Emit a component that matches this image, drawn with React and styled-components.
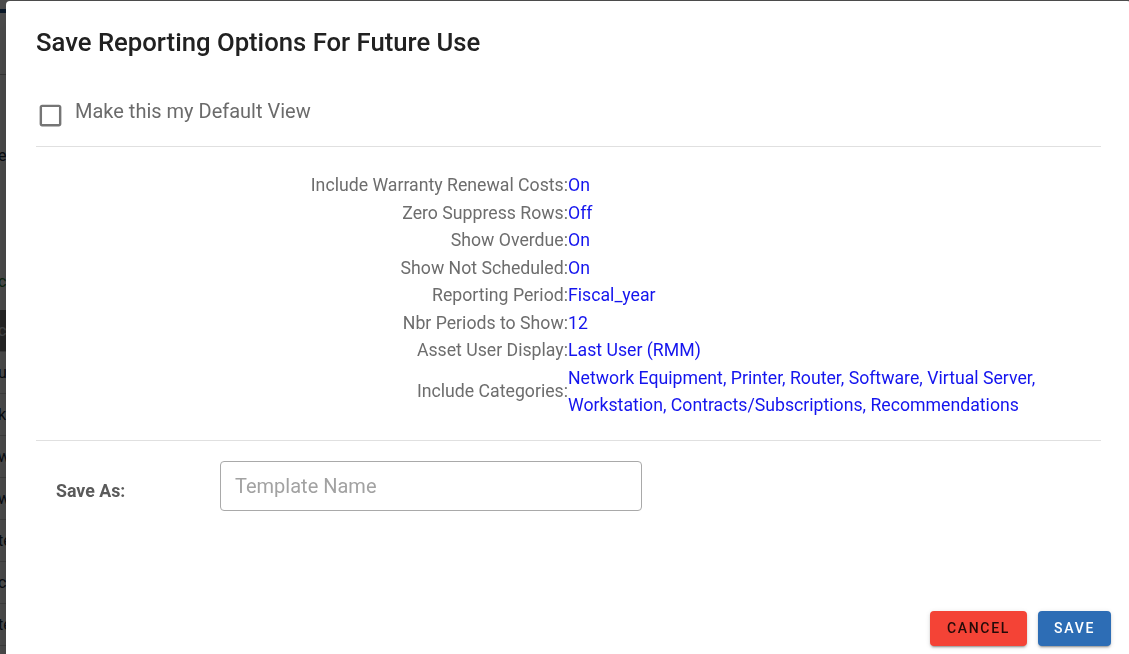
import React from "react";
import styled, { createGlobalStyle } from "styled-components";

const GlobalStyle = createGlobalStyle`
  html, body {
    margin: 0;
    padding: 0;
    width: 100%;
    height: 100%;
    overflow: hidden;
    background: #ffffff;
    font-family: Roboto, "Liberation Sans", Arial, sans-serif;
  }
`;

/* ---------- page behind the modal ---------- */

const Page = styled.div`
  width: 1129px;
  height: 654px;
  overflow: hidden;
  background: #ffffff;
  display: flex;
  flex-direction: column;
  & > * {
    flex-shrink: 0;
  }
`;

const PageHeader = styled.div`
  height: 75px;
  box-sizing: border-box;
  padding-top: 9px;
  border-bottom: 1px solid #b8b8b8;
  &::before {
    content: "";
    display: block;
    width: 18px;
    height: 4px;
    background: #1f4f86;
  }
`;

const PageSection = styled.div`
  height: 235px;
  padding-top: 72px;
  box-sizing: border-box;
  display: flex;
  flex-direction: column;
  gap: 108px;
`;

const PageText = styled.span`
  font-size: 16px;
  line-height: 18px;
  margin-left: -2px;
  color: ${(p) => p.$color || "#1c2b3a"};
`;

const TableHead = styled.div`
  height: 42px;
  box-sizing: border-box;
  background: #7f7f7f;
  display: flex;
  align-items: center;
  border-bottom: 1px solid #c9c9c9;
`;

const TableRow = styled.div`
  height: 42px;
  box-sizing: border-box;
  display: flex;
  align-items: center;
  border-bottom: 1px solid #cfcfcf;
`;

/* ---------- modal ---------- */

const Backdrop = styled.div`
  position: fixed;
  inset: 0;
  background: rgba(0, 0, 0, 0.7);
`;

const Dialog = styled.div`
  position: fixed;
  left: 6px;
  top: 1px;
  width: 1125px;
  height: 680px;
  background: #ffffff;
  border-radius: 4px;
  box-shadow: 0 11px 15px -7px rgba(0, 0, 0, 0.2),
    0 24px 38px 3px rgba(0, 0, 0, 0.14);
  padding: 25px 30px 0 30px;
  box-sizing: border-box;
  display: flex;
  flex-direction: column;
  color: rgba(0, 0, 0, 0.87);
`;

const Title = styled.h2`
  margin: 0 0 40px 0;
  font-size: 25.7px;
  line-height: 32px;
  font-weight: 500;
  color: #212121;
`;

const CheckRow = styled.label`
  display: flex;
  align-items: flex-start;
  height: 32px;
`;

const CheckIcon = styled.svg`
  width: 29px;
  height: 29px;
  margin-top: 3px;
  fill: #757575;
  flex-shrink: 0;
`;

const CheckLabel = styled.span`
  margin-left: 10px;
  font-size: 20px;
  line-height: 26px;
  color: #6b6b6b;
`;

const Divider = styled.hr`
  margin: ${(p) => p.$top}px 0 0 0;
  border: none;
  border-top: 1px solid #e0e0e0;
  height: 0;
`;

const Options = styled.div`
  margin-top: 25px;
  display: grid;
  grid-template-columns: 532px 1fr;
  font-size: 17.7px;
  line-height: 27.5px;
`;

const OptLabel = styled.div`
  text-align: right;
  color: #6d6d6d;
  align-self: center;
`;

const OptValue = styled.div`
  color: #1414ee;
  max-width: 500px;
`;

const SaveRow = styled.div`
  margin-top: 20px;
  display: flex;
  align-items: center;
`;

const SaveLabel = styled.div`
  width: 184px;
  padding-left: 20px;
  box-sizing: border-box;
  font-size: 17.8px;
  font-weight: 700;
  color: #5a5a5a;
  margin-top: 10px;
`;

const NameInput = styled.input`
  width: 422px;
  height: 50px;
  box-sizing: border-box;
  border: 1px solid #a9a9a9;
  border-radius: 4px;
  padding: 0 14px;
  font-family: Roboto, "Liberation Sans", Arial, sans-serif;
  font-size: 20px;
  color: #333;
  outline: none;
  &::placeholder {
    color: #a2a2a2;
  }
`;

const Footer = styled.div`
  margin-top: 100px;
  margin-right: -10px;
  display: flex;
  justify-content: flex-end;
  gap: 11px;
`;

const Button = styled.button`
  height: 35px;
  padding: 0 ${(p) => p.$px}px;
  border: none;
  border-radius: 4px;
  background: ${(p) => p.$bg};
  color: ${(p) => p.$fg};
  font-family: Roboto, "Liberation Sans", Arial, sans-serif;
  font-size: 14px;
  font-weight: 500;
  letter-spacing: 1.7px;
  text-transform: uppercase;
  box-shadow: 0 3px 1px -2px rgba(0, 0, 0, 0.2), 0 2px 2px 0 rgba(0, 0, 0, 0.14),
    0 1px 5px 0 rgba(0, 0, 0, 0.12);
  cursor: pointer;
`;

const options = [
  ["Include Warranty Renewal Costs:", "On"],
  ["Zero Suppress Rows:", "Off"],
  ["Show Overdue:", "On"],
  ["Show Not Scheduled:", "On"],
  ["Reporting Period:", "Fiscal_year"],
  ["Nbr Periods to Show:", "12"],
  ["Asset User Display:", "Last User (RMM)"],
  [
    "Include Categories:",
    "Network Equipment, Printer, Router, Software, Virtual Server, Workstation, Contracts/Subscriptions, Recommendations",
  ],
];

const rowTexts = ["use", "kiosk", "work", "wan", "test", "cost", "term", ""];

export default function App() {
  return (
    <>
      <GlobalStyle />
      <Page>
        <PageHeader />
        <PageSection>
          <PageText>edit</PageText>
          <PageText $color="#2e7d32">cost</PageText>
        </PageSection>
        <TableHead>
          <PageText $color="#e8eef2">co</PageText>
        </TableHead>
        {rowTexts.map((t, i) => (
          <TableRow key={i}>
            <PageText>{t}</PageText>
          </TableRow>
        ))}
      </Page>
      <Backdrop />
      <Dialog>
        <Title>Save Reporting Options For Future Use</Title>
        <CheckRow>
          <CheckIcon viewBox="0 0 24 24">
            <path d="M19 5v14H5V5h14m0-2H5c-1.1 0-2 .9-2 2v14c0 1.1.9 2 2 2h14c1.1 0 2-.9 2-2V5c0-1.1-.9-2-2-2z" />
          </CheckIcon>
          <CheckLabel>Make this my Default View</CheckLabel>
        </CheckRow>
        <Divider $top={16} />
        <Options>
          {options.map(([label, value]) => (
            <React.Fragment key={label}>
              <OptLabel>{label}</OptLabel>
              <OptValue>{value}</OptValue>
            </React.Fragment>
          ))}
        </Options>
        <Divider $top={20} />
        <SaveRow>
          <SaveLabel>Save As:</SaveLabel>
          <NameInput placeholder="Template Name" />
        </SaveRow>
        <Footer>
          <Button $bg="#f44336" $fg="rgba(0,0,0,0.85)" $px={17}>
            Cancel
          </Button>
          <Button $bg="#2d6db5" $fg="#ffffff" $px={16}>
            Save
          </Button>
        </Footer>
      </Dialog>
    </>
  );
}
